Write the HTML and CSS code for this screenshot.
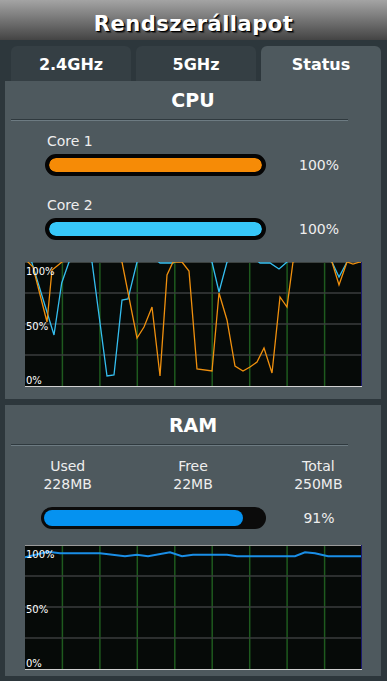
FILE: index.html
```html
<!DOCTYPE html>
<html lang="hu">
<head>
<meta charset="utf-8">
<title>Rendszerállapot</title>
<link rel="stylesheet" href="styles.css">
</head>
<body>
<header class="title">Rendszerállapot</header>
<nav class="tabs">
  <div class="tab">2.4GHz</div>
  <div class="tab">5GHz</div>
  <div class="tab active">Status</div>
</nav>
<main class="content">
  <section class="panel cpu">
    <h2 class="panel-title">CPU</h2>
    <div class="divider"></div>
    <div class="core">
      <div class="core-label">Core 1</div>
      <div class="bar-row">
        <div class="core-bar"><div class="core-fill orange"></div></div>
        <span class="pct">100%</span>
      </div>
    </div>
    <div class="core second">
      <div class="core-label">Core 2</div>
      <div class="bar-row">
        <div class="core-bar"><div class="core-fill blue"></div></div>
        <span class="pct">100%</span>
      </div>
    </div>
    <div class="chart cpu-chart">
      <svg width="337" height="124" viewBox="0 0 337 124">
        <g class="vgrid">
          <line x1="37.4" y1="0" x2="37.4" y2="124"/>
          <line x1="74.9" y1="0" x2="74.9" y2="124"/>
          <line x1="112.3" y1="0" x2="112.3" y2="124"/>
          <line x1="149.8" y1="0" x2="149.8" y2="124"/>
          <line x1="187.2" y1="0" x2="187.2" y2="124"/>
          <line x1="224.7" y1="0" x2="224.7" y2="124"/>
          <line x1="262.1" y1="0" x2="262.1" y2="124"/>
          <line x1="299.6" y1="0" x2="299.6" y2="124"/>
        </g>
        <g class="hgrid">
          <line x1="0" y1="31" x2="337" y2="31"/>
          <line x1="0" y1="62" x2="337" y2="62"/>
          <line x1="0" y1="93" x2="337" y2="93"/>
        </g>
        <line class="topline" x1="0" y1="0.5" x2="337" y2="0.5"/>
        <polyline class="l-blue" points="0,-3 6.7,0 29,73 36.7,21 44,0 50,-3 62,-3 67,0 82,114 89,113 97,38 103,37 112,0 118,-3 130,-3 135,1 148,1 155,-3 180,-3 187,0 194,30 202,0 208,-3 230,-3 235,1 245,1 254,7 262,0 268,-3 300,-3 307,0 314,15 322,0 328,-3 337,-3"/>
        <polyline class="l-orange" points="0,-3 8,5 22,60 27,8 37,0 45,-3 90,-3 97,0 112,76 119,65 127,45 135,114 142,13 148,0 157,0 164,9 172,107 187,109 194,31 202,58 210,104 218,109 225,105 232,100 239,86 247,111 255,35 262,45 268,0 275,-3 300,-3 307,0 314,23 322,0 328,2 335,0 337,0"/>
        <line class="rightline" x1="336.5" y1="0" x2="336.5" y2="124"/>
      </svg>
      <span class="axis a100">100%</span>
      <span class="axis a50">50%</span>
      <span class="axis a0">0%</span>
    </div>
  </section>

  <section class="panel ram">
    <h2 class="panel-title">RAM</h2>
    <div class="divider"></div>
    <div class="stats">
      <div class="stat"><div>Used</div><div>228MB</div></div>
      <div class="stat"><div>Free</div><div>22MB</div></div>
      <div class="stat"><div>Total</div><div>250MB</div></div>
    </div>
    <div class="bar-row ram-row">
      <div class="ram-bar"><div class="ram-fill" style="width: 91%"></div></div>
      <span class="pct">91%</span>
    </div>
    <div class="chart ram-chart">
      <svg width="337" height="124" viewBox="0 0 337 124">
        <g class="vgrid">
          <line x1="37.4" y1="0" x2="37.4" y2="124"/>
          <line x1="74.9" y1="0" x2="74.9" y2="124"/>
          <line x1="112.3" y1="0" x2="112.3" y2="124"/>
          <line x1="149.8" y1="0" x2="149.8" y2="124"/>
          <line x1="187.2" y1="0" x2="187.2" y2="124"/>
          <line x1="224.7" y1="0" x2="224.7" y2="124"/>
          <line x1="262.1" y1="0" x2="262.1" y2="124"/>
          <line x1="299.6" y1="0" x2="299.6" y2="124"/>
        </g>
        <g class="hgrid">
          <line x1="0" y1="31" x2="337" y2="31"/>
          <line x1="0" y1="62" x2="337" y2="62"/>
          <line x1="0" y1="93" x2="337" y2="93"/>
        </g>
        <line class="topline light" x1="0" y1="0.5" x2="337" y2="0.5"/>
        <polyline class="l-ram" points="0,12.3 23,6.7 35,8.3 75,8.3 100,11.3 112,9.7 123,11.3 145,7.3 157,11.3 168,9.7 202,9.7 212,11.3 270,11.3 280,7.3 290,8.3 303,11.3 337,11.3"/>
        <line class="rightline" x1="336.5" y1="0" x2="336.5" y2="124"/>
      </svg>
      <span class="axis a100">100%</span>
      <span class="axis a50">50%</span>
      <span class="axis a0">0%</span>
    </div>
  </section>
</main>
</body>
</html>
```
FILE: styles.css
```css
* { box-sizing: border-box; }

html, body {
  margin: 0;
  padding: 0;
}

body {
  width: 387px;
  min-height: 681px;
  background: #2d373c;
  font-family: "DejaVu Sans", Verdana, sans-serif;
  color: #eeeeee;
  overflow: hidden;
}

.title {
  height: 40px;
  padding-top: 10px;
  line-height: 28px;
  text-align: center;
  font-size: 21px;
  font-weight: bold;
  letter-spacing: 0.5px;
  color: #ffffff;
  text-shadow: 1px 1px 0 #000, 2px 2px 1px rgba(0,0,0,0.5);
  background: linear-gradient(to bottom, #a4a4a4 0%, #444444 100%);
}

.tabs {
  display: flex;
  gap: 5px;
  padding: 6px 0 0 11px;
}

.tab {
  width: 120px;
  height: 35px;
  padding-top: 1px;
  line-height: 35px;
  text-align: center;
  font-size: 16px;
  font-weight: bold;
  color: #ffffff;
  background: #353f44;
  border-radius: 6px 6px 0 0;
}

.tab.active {
  background: #4e595e;
}

.content {
  margin-left: 5px;
  width: 376px;
  display: flex;
  flex-direction: column;
  gap: 6px;
}

.panel {
  background: #4e595e;
  padding: 7px 0 12px;
}

.panel.ram {
  padding: 8px 0 6px;
}

.panel-title {
  margin: 0;
  font-size: 19px;
  line-height: 24px;
  font-weight: bold;
  text-align: center;
  color: #ffffff;
}

.divider {
  margin: 7px 0 0 6px;
  width: 337px;
  height: 2px;
  border-top: 1px solid #2f393e;
  border-bottom: 1px solid #6d7b82;
}

.core {
  margin-top: 12px;
  padding-left: 40px;
}

.core.second {
  margin-top: 21px;
}

.core-label {
  padding-left: 2px;
  font-size: 14px;
  line-height: 17px;
  margin-bottom: 4px;
}

.bar-row {
  display: flex;
  align-items: center;
  height: 22px;
}

.pct {
  width: 80px;
  margin-left: 13px;
  text-align: center;
  font-size: 14px;
  line-height: 17px;
}

.core-bar {
  width: 221px;
  height: 22px;
  border: 4px solid #050505;
  border-radius: 11px;
  background: #050505;
  overflow: hidden;
}

.core-fill {
  width: 100%;
  height: 100%;
  border-radius: 7px;
}

.core-fill.orange { background: #f68b06; }
.core-fill.blue { background: #37c7f8; }

.chart {
  position: relative;
  margin: 22px 0 0 20px;
  width: 337px;
  height: 125px;
  background: #060a08;
  border-bottom: 1px solid #d0d0d0;
}

.chart svg {
  display: block;
}

.vgrid line {
  stroke: #1e5a1e;
  stroke-width: 1.5;
}

.hgrid line {
  stroke: #3a3d3c;
  stroke-width: 1.3;
}

.topline {
  stroke: #3c4240;
  stroke-width: 1;
}

.topline.light {
  stroke: #9a9a9a;
}

.rightline {
  stroke: #1a1a70;
  stroke-width: 1;
}

polyline {
  fill: none;
  stroke-linejoin: miter;
}

.l-blue {
  stroke: #35bff0;
  stroke-width: 1.3;
}

.l-orange {
  stroke: #f0900e;
  stroke-width: 1.3;
}

.l-ram {
  stroke: #1a8ee6;
  stroke-width: 2;
}

.axis {
  position: absolute;
  left: 1px;
  font-size: 10px;
  line-height: 12px;
  color: #ffffff;
}

.a100 { top: 4px; }
.a50 { top: 59px; }
.a0 { top: 113px; }

.stats {
  display: grid;
  grid-template-columns: 1fr 1fr 1fr;
  margin-top: 11px;
  font-size: 14px;
  line-height: 18px;
  text-align: center;
}

.ram-row {
  margin-top: 14px;
  padding-left: 36px;
}

.ram-bar {
  width: 225px;
  height: 22px;
  padding: 3px;
  border-radius: 11px;
  background: #0b0b0b;
}

.ram-fill {
  height: 100%;
  border-radius: 8px;
  background: #0592f0;
}

.ram-chart {
  margin-top: 16px;
}
```
